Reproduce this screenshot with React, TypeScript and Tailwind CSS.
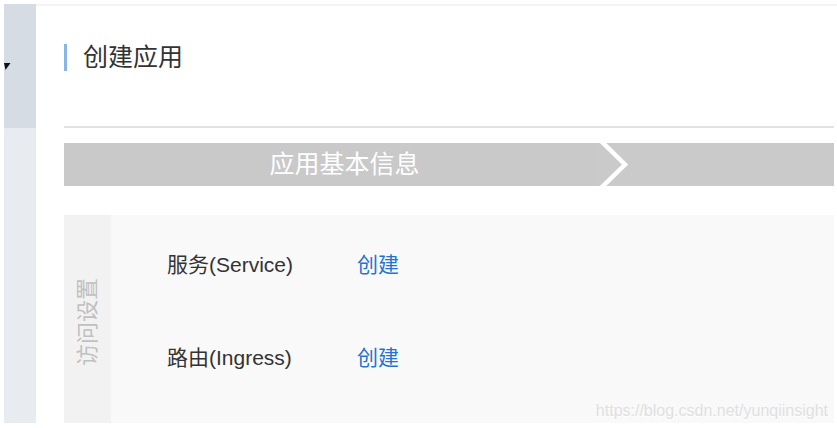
const cjk = { fontFamily: '"Liberation Sans", "Noto Sans CJK SC", sans-serif' };

const AccessRow = ({ label, mt }: { label: string; mt: string }) => {
  return (
    <div className={`flex items-center h-[30px] ${mt}`}>
      <span className="w-[190px] text-[21px] text-[#333333] leading-none">{label}</span>
      <button className="text-[21px] text-[#1f74d4] leading-none">创建</button>
    </div>
  );
};

export default function App() {
  return (
    <div className="w-[837px] h-[428px] bg-white pt-1 pl-1 flex overflow-hidden" style={cjk}>
      {/* side menu */}
      <div className="w-8 h-[419px] flex flex-col">
        <div className="relative h-[124px] bg-[#d5dce4] overflow-hidden">
          <svg className="absolute left-0 top-[59px]" width="8" height="8" viewBox="0 0 8 8">
            <polygon points="0,0 6.5,0 1.5,7" fill="#111" />
          </svg>
        </div>
        <div className="flex-1 bg-[#e8ecf1]"></div>
      </div>

      {/* main */}
      <div className="flex-1 border-t-2 border-[#f3f3f3] pl-7 pr-[3px]">
        <div className="flex items-center h-[27px] mt-[38px]">
          <div className="w-[3px] h-[27px] bg-[#86b6e6]"></div>
          <h1 className="ml-4 text-[25px] text-[#333333] leading-none">创建应用</h1>
        </div>

        <div className="mt-[55px] border-t-2 border-[#e2e2e2]"></div>

        <div className="relative mt-[15px] h-[43px] bg-[#c9c9c9] flex">
          <div className="w-[533px] flex items-center justify-center">
            <span className="text-[25px] text-white leading-none ml-[28px]">应用基本信息</span>
          </div>
          <div className="flex-1 bg-[#cacaca]"></div>
          <svg className="absolute left-[533px] top-0" width="32" height="43" viewBox="0 0 32 43">
            <polyline points="3,-3 28,21.5 3,46" fill="none" stroke="#ffffff" strokeWidth="4.5" />
          </svg>
        </div>

        <div className="mt-[29px] h-[208px] flex">
          <div className="w-[47px] bg-[#f2f2f2] flex items-center justify-center">
            <span className="-rotate-90 whitespace-nowrap text-[22px] text-[#c0c0c0] leading-none mt-[6px]">
              访问设置
            </span>
          </div>
          <div className="relative flex-1 bg-[#f9f9f9] pl-14">
            <AccessRow label="服务(Service)" mt="mt-[34px]" />
            <AccessRow label="路由(Ingress)" mt="mt-[63px]" />
            <span className="absolute right-[6px] bottom-[4px] text-[16px] leading-none text-[#e0e0e0] [text-shadow:0_1px_0_#ffffff]">
              https://blog.csdn.net/yunqiinsight
            </span>
          </div>
        </div>
      </div>
    </div>
  );
}
